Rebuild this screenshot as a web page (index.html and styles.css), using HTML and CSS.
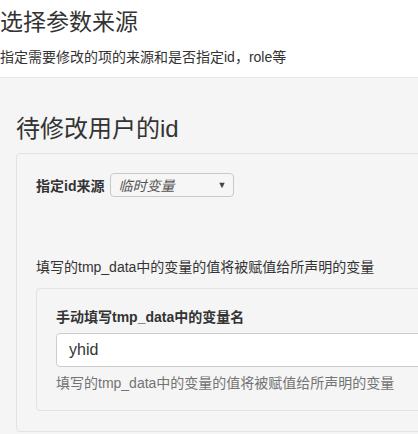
FILE: index.html
```html
<!DOCTYPE html>
<html lang="zh-CN">
<head>
    <meta charset="UTF-8">
    <meta name="viewport" content="width=device-width, initial-scale=1.0">
    <title>选择参数来源</title>
    <link rel="stylesheet" href="styles.css">
</head>
<body>

    <div class="page-head">
        <h1>选择参数来源</h1>
        <p>指定需要修改的项的来源和是否指定id，role等</p>
    </div>

    <div class="content">
        <h2>待修改用户的id</h2>
        <div class="well">
            <div class="src-row">
                <label>指定id来源</label>
                <div class="fake-select">
                    <span>临时变量</span>
                    <span class="caret">▼</span>
                </div>
            </div>

            <p class="desc">填写的tmp_data中的变量的值将被赋值给所声明的变量</p>

            <div class="well inner">
                <label class="field-label">手动填写tmp_data中的变量名</label>
                <input class="form-control" type="text" value="yhid">
                <p class="help">填写的tmp_data中的变量的值将被赋值给所声明的变量</p>
            </div>
        </div>
    </div>

</body>
</html>
```

FILE: styles.css
```css
html, body { height: 100%; }
body {
    margin: 0;
    overflow: hidden;
    font-family: "Liberation Sans", Arial, "Noto Sans CJK SC", sans-serif;
    font-size: 14px;
    color: #333;
    background: #f5f5f5;
}

.page-head {
    background: #fff;
    height: 77px;
    border-bottom: 1px solid #e8e8e8;
}
.page-head h1 {
    margin: 0;
    padding-top: 7px;
    font-size: 23px;
    font-weight: normal;
    line-height: 30px;
}
.page-head p {
    margin: 10px 0 0;
    line-height: 20px;
}

.content {
    padding-left: 16px;
    width: 500px;
}
.content h2 {
    margin: 36px 0 9px;
    font-size: 24px;
    font-weight: normal;
    line-height: 30px;
}

.well {
    background: #f5f5f5;
    border: 1px solid #e3e3e3;
    border-radius: 4px;
    padding: 19px 19px 20px;
    min-height: 232px;
}

.src-row {
    display: flex;
    align-items: center;
    gap: 6px;
}
.src-row label { font-weight: bold; }

.fake-select {
    width: 108px;
    height: 22px;
    border: 1px solid #c8c8c8;
    border-radius: 4px;
    background: #f6f6f6;
    display: flex;
    align-items: center;
    justify-content: space-between;
    padding: 0 7px;
    font-style: italic;
    color: #555;
}
.caret {
    font-style: normal;
    font-size: 9px;
    color: #444;
}

.desc {
    margin: 60px 0 11px;
    line-height: 20px;
}

.inner {
    min-height: 0;
    padding: 18px 19px 17px;
}
.field-label {
    display: block;
    font-weight: bold;
    line-height: 20px;
    margin-bottom: 6px;
}
.form-control {
    display: block;
    box-sizing: border-box;
    width: 100%;
    height: 34px;
    margin: 0;
    padding: 0 12px;
    font-family: inherit;
    font-size: 16px;
    color: #333;
    background: #fff;
    border: 1px solid #ccc;
    border-radius: 4px;
}
.help {
    margin: 6px 0 0;
    line-height: 20px;
    color: #737373;
}
```
